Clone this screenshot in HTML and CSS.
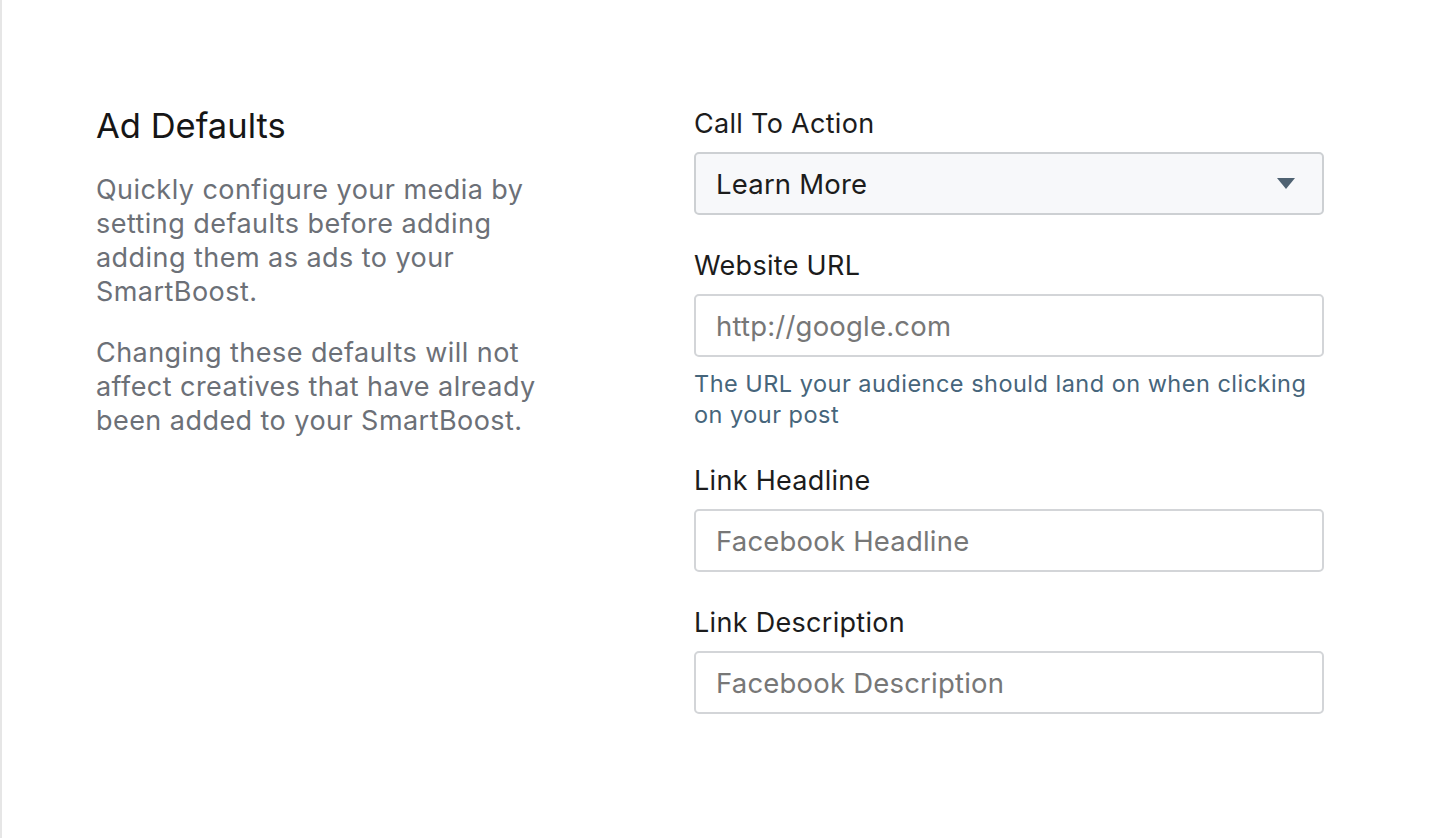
FILE: index.html
```html
<!DOCTYPE html>
<html>
<head>
    <title>Ad Defaults</title>
    <link rel="stylesheet" href="styles.css">
</head>
<body>
    <div class="page">
        <div class="intro">
            <h2>Ad Defaults</h2>
            <p>Quickly configure your media by setting defaults before adding adding them as ads to your SmartBoost.</p>
            <p>Changing these defaults will not affect creatives that have already been added to your SmartBoost.</p>
        </div>

        <form class="fields">
            <div class="field">
                <label for="cta">Call To Action</label>
                <div class="select-wrap">
                    <select id="cta">
                        <option>Learn More</option>
                        <option>Shop Now</option>
                        <option>Sign Up</option>
                    </select>
                    <svg class="caret" width="18" height="11" viewBox="0 0 18 11"><path d="M0 0H18L9 11Z" fill="#4f6272"/></svg>
                </div>
            </div>

            <div class="field">
                <label for="url">Website URL</label>
                <input type="text" id="url" placeholder="http://google.com">
                <div class="help">The URL your audience should land on when clicking on your post</div>
            </div>

            <div class="field">
                <label for="headline">Link Headline</label>
                <input type="text" id="headline" placeholder="Facebook Headline">
            </div>

            <div class="field">
                <label for="description">Link Description</label>
                <input type="text" id="description" placeholder="Facebook Description">
            </div>
        </form>
    </div>
</body>
</html>
```

FILE: styles.css
```css
body {
    margin: 0;
    background-color: #fff;
    font-family: Inter, "Liberation Sans", Arial, sans-serif;
}
.page {
    min-height: 838px;
    box-sizing: border-box;
    border-left: 2px solid #e6e6e6;
    padding: 106px 0 0 94px;
    display: grid;
    grid-template-columns: 460px 630px;
    column-gap: 138px;
    align-items: start;
}
.intro h2 {
    margin: 0 0 27px;
    font-size: 34.5px;
    line-height: 40px;
    font-weight: 400;
    color: #161616;
}
.intro p {
    margin: 0 0 27px;
    font-size: 27px;
    line-height: 34px;
    letter-spacing: 0.45px;
    color: #6c7077;
    max-width: 450px;
}
.fields {
    margin: 0;
    padding-top: 1px;
}
.field {
    margin-bottom: 34px;
}
label {
    display: block;
    font-size: 27px;
    line-height: 34px;
    letter-spacing: 0.3px;
    color: #1c1c1c;
    margin-bottom: 11px;
}
.select-wrap {
    position: relative;
}
select, input[type="text"] {
    display: block;
    width: 100%;
    height: 63px;
    box-sizing: border-box;
    padding: 0 20px;
    border: 2px solid #d3d5d8;
    border-radius: 5px;
    font-family: inherit;
    font-size: 27.5px;
    letter-spacing: 0.2px;
    color: #1c1c1c;
    background-color: #fff;
    outline: none;
}
select {
    -webkit-appearance: none;
    appearance: none;
    background-color: #f7f8fa;
    border-color: #cdd0d3;
}
input::placeholder {
    color: #777;
}
.caret {
    position: absolute;
    right: 29px;
    top: 26px;
    pointer-events: none;
}
.help {
    margin-top: 11px;
    font-size: 23.5px;
    line-height: 31px;
    letter-spacing: 0.48px;
    color: #46657b;
}
```
